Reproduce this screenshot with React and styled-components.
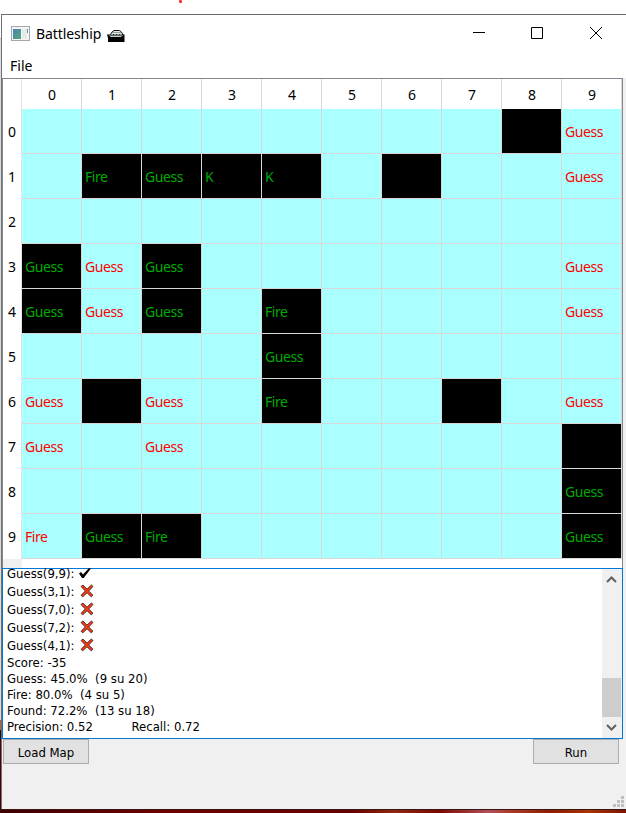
import React from 'react';
import styled, { createGlobalStyle } from 'styled-components';

const GlobalStyle = createGlobalStyle`
  * { box-sizing: border-box; }
  body { margin: 0; background: #fff; overflow: hidden; }
`;

const Desktop = styled.div`
  width: 626px;
  height: 813px;
  padding-top: 14px;
  position: relative;
  display: flex;
  flex-direction: column;
  background: #fff;
  color: #000;
  font-family: 'Noto Sans', 'Open Sans', sans-serif;
`;
const RedDot = styled.i`
  position: absolute;
  left: 179px;
  top: 0;
  width: 3px;
  height: 3px;
  border-radius: 1px;
  background: #ff3030;
`;
const WindowRow = styled.div`
  display: flex;
  height: 795px;
`;
const DesktopEdge = styled.div`
  width: 1px;
  background: linear-gradient(#fff 0 24px, #bbb 24px 25px, #dcdcdc 25px 706px, #b4602a 706px 716px, #111 716px 726px, #500000 726px);
`;
const Window = styled.div`
  flex: 1;
  display: flex;
  flex-direction: column;
  border-left: 1px solid #6e7176;
  border-top: 1px solid #6b6668;
  background: #f0f0f0;
`;
const Wallpaper = styled.div`
  height: 4px;
  border-top: 1px solid #3a1512;
  background: linear-gradient(90deg, #3c0000, #6b0000 25%, #650000 56%, #8b2810 63%, #7a0800 70%, #b05058 78%, #a83a24 82%, #8c1c00 88%, #a83400 94%, #7d1400);
`;
const TitleBar = styled.header`
  height: 37px;
  display: flex;
  align-items: center;
  padding-left: 9px;
  background: #fff;
  font-size: 14px;
`;
const Title = styled.span`
  width: 67px;
  margin: 0 4px 0 5px;
  white-space: nowrap;
  letter-spacing: -0.1px;
`;
const Controls = styled.div`
  margin-left: auto;
  padding: 0 1px 1px 0;
  display: flex;
`;
const ControlIcon = styled.svg`
  display: block;
  width: ${(p) => p.$width}px;
  height: 36px;
`;
const MenuBar = styled.nav`
  height: 26px;
  padding-left: 8px;
  font-size: 14px;
  line-height: 27px;
  background: #fff;
`;
const Body = styled.div`
  width: 621px;
  display: flex;
  flex-direction: column;
`;
const Board = styled.section`
  height: 490px;
  display: grid;
  grid-template-columns: 19px repeat(10, 60px);
  grid-template-rows: 30px repeat(10, 45px) 9px;
  border: 1px solid #828790;
  border-bottom: 0;
  background: #fff;
  font-size: 14px;
`;
const ColumnHeader = styled.div`
  display: flex;
  align-items: center;
  justify-content: center;
  padding: 1px 0 0 1px;
  border-right: 1px solid #d9d9d9;
`;
const RowHeader = styled.div`
  display: flex;
  align-items: center;
  justify-content: center;
  padding-bottom: 1px;
  border-right: 1px solid #e3e3e3;
`;
const Cell = styled.div`
  display: flex;
  align-items: center;
  padding: 1px 0 0 3px;
  border-right: 1px solid #d8d8d8;
  border-bottom: 1px solid #d8d8d8;
  letter-spacing: -0.45px;
  background: ${(p) => (p.$ship ? '#000' : '#aaffff')};
  color: ${(p) => (p.$ship ? '#00aa00' : '#ff0000')};
`;
const Filler = styled.div`
  background: #f0f0f0;
`;
const LogBox = styled.section`
  height: 171px;
  display: flex;
  border: 1px solid #0078d7;
  background: #fff;
`;
const Log = styled.div`
  flex: 1;
  height: 169px;
  padding-left: 4px;
  font-size: 13px;
  font-family: 'DejaVu Sans Condensed', 'DejaVu Sans', sans-serif;
  font-stretch: condensed;
`;
const Line = styled.div`
  height: ${(p) => (p.$tall ? 18 : 16)}px;
  display: flex;
  align-items: center;
  white-space: pre;
`;
const FirstLines = styled.div`
  margin-top: -5px;
`;
const LineLabel = styled.span`
  width: 72px;
`;
const Mark = styled.svg`
  display: block;
`;
const Metrics = styled(Line)`
  width: 193px;
  justify-content: space-between;
`;
const ScrollBar = styled.div`
  width: 20px;
  display: flex;
  flex-direction: column;
  background: #f0f0f0;
`;
const Arrow = styled.svg`
  display: block;
  width: 19px;
  height: 21px;
`;
const Thumb = styled.div`
  width: 19px;
  height: 39px;
  margin-top: 88px;
  background: #cdcdcd;
`;
const Actions = styled.footer`
  display: flex;
  justify-content: space-between;
  padding: 0 4px 0 1px;
`;
const PushButton = styled.button`
  width: 86px;
  height: 25px;
  padding: 2px 0 0;
  border: 1px solid #adadad;
  background: #e1e1e1;
  color: #000;
  font-family: 'DejaVu Sans Condensed', 'DejaVu Sans', sans-serif;
  font-stretch: condensed;
  font-size: 13px;
`;
const Grip = styled.svg`
  width: 11px;
  height: 12px;
  margin: auto 2px 1px auto;
`;

const board = [
  '........#g',
  '.FGKK.#..g',
  '..........',
  'GgG......g',
  'GgG.F....g',
  '....G.....',
  'g#g.F..#.g',
  'g.g......#',
  '.........G',
  'fGF......G',
];
const names = { G: 'Guess', F: 'Fire', K: 'K' };
const misses = ['Guess(3,1):', 'Guess(7,0):', 'Guess(7,2):', 'Guess(4,1):'];

const AppIcon = () => (
  <svg width="20" height="16" viewBox="0 0 20 16">
    <defs>
      <linearGradient id="pane" x1="0" y1="0" x2="1" y2="1">
        <stop offset="0" stopColor="#4b82b4" />
        <stop offset="1" stopColor="#58a675" />
      </linearGradient>
    </defs>
    <rect x=".5" y=".5" width="18" height="14" fill="#f5f5f5" stroke="#a3a8aa" />
    <rect x="2" y="3" width="8" height="10" fill="url(#pane)" />
    <rect x="11" y="3" width="5" height="10" fill="#e7eaea" />
    <rect x="16" y="3" width="1" height="4" fill="#529eaa" />
  </svg>
);
const ShipIcon = () => (
  <svg width="18" height="18" viewBox="0 0 18 18">
    <path d="M3.5 9.5 5 7 7 5.5h5.5L14.5 7l1.5 3z" fill="#dfe6e6" stroke="#111" />
    <path d="M5.5 7.5h9" stroke="#555" strokeDasharray="1 1" />
    <path d="M0 9.5h17.5V17H1v-4z" fill="#000" />
    <path d="M1.5 10.5 4 12h9.5l3-1.5z" fill="#c3d0d0" />
    <path d="M4 9.5h11" stroke="#8a9999" strokeDasharray="2 1" />
  </svg>
);
const Check = () => (
  <Mark width="13" height="12" viewBox="0 0 13 12">
    <path d="M0 6.5 2 5l2 2.5L10 1l2 .4L4.7 11H3z" fill="#000" />
  </Mark>
);
const Cross = () => (
  <Mark width="15" height="14" viewBox="-1 0 15 14">
    <path d="M1 2.5 3 1l4 4.1L11.3 1 13 2.5 8.7 7l4.3 4.2-1.8 1.6L7 8.8l-4.2 4L1 11.3 5.3 7z" fill="#f03a17" stroke="#4c2a25" strokeWidth=".9" />
  </Mark>
);

export default function App() {
  return (
    <Desktop>
      <GlobalStyle />
      <RedDot />
      <WindowRow>
        <DesktopEdge />
        <Window>
          <TitleBar>
            <AppIcon />
            <Title>Battleship</Title>
            <ShipIcon />
            <Controls>
              <ControlIcon $width={58} viewBox="0 0 58 36"><path d="M24 17.5h12" stroke="#000" shapeRendering="crispEdges" /></ControlIcon>
              <ControlIcon $width={59} viewBox="0 0 59 36"><path d="M24.5 12.5h11v11h-11z" fill="none" stroke="#000" /></ControlIcon>
              <ControlIcon $width={59} viewBox="0 0 59 36"><path d="m24 12 12 12m0-12L24 24" stroke="#000" /></ControlIcon>
            </Controls>
          </TitleBar>
          <MenuBar>File</MenuBar>
          <Body>
            <Board>
              <RowHeader />
              {[...'0123456789'].map((n) => <ColumnHeader key={n}>{n}</ColumnHeader>)}
              {board.map((row, r) => (
                <React.Fragment key={r}>
                  <RowHeader>{r}</RowHeader>
                  {[...row].map((c, i) => (
                    <Cell key={i} $ship={c === '#' || 'GFK'.includes(c)}>{names[c.toUpperCase()]}</Cell>
                  ))}
                </React.Fragment>
              ))}
              <Filler />
            </Board>
            <LogBox>
              <Log>
                <FirstLines>
                  <Line $tall><LineLabel>Guess(9,9):</LineLabel><Check /></Line>
                  {misses.map((m) => <Line key={m} $tall><LineLabel>{m}</LineLabel><Cross /></Line>)}
                </FirstLines>
                <Line>Score: -35</Line>
                <Line>Guess: 45.0%  (9 su 20)</Line>
                <Line>Fire: 80.0%  (4 su 5)</Line>
                <Line>Found: 72.2%  (13 su 18)</Line>
                <Metrics><span>Precision: 0.52</span><span>Recall: 0.72</span></Metrics>
              </Log>
              <ScrollBar>
                <Arrow viewBox="0 0 19 21"><path d="m5 13 4.5-4.5L14 13" fill="none" stroke="#606060" strokeWidth="2" /></Arrow>
                <Thumb />
                <Arrow viewBox="0 0 19 21"><path d="m5 8 4.5 4.5L14 8" fill="none" stroke="#606060" strokeWidth="2" /></Arrow>
              </ScrollBar>
            </LogBox>
            <Actions>
              <PushButton>Load Map</PushButton>
              <PushButton>Run</PushButton>
            </Actions>
          </Body>
          <Grip viewBox="0 0 11 12" fill="#bfbfbf">
            <path d="M8 0h3v3H8zM4 4h3v3H4zM8 4h3v3H8zM0 8h3v3H0zM4 8h3v3H4zM8 8h3v3H8z" />
          </Grip>
        </Window>
      </WindowRow>
      <Wallpaper />
    </Desktop>
  );
}
